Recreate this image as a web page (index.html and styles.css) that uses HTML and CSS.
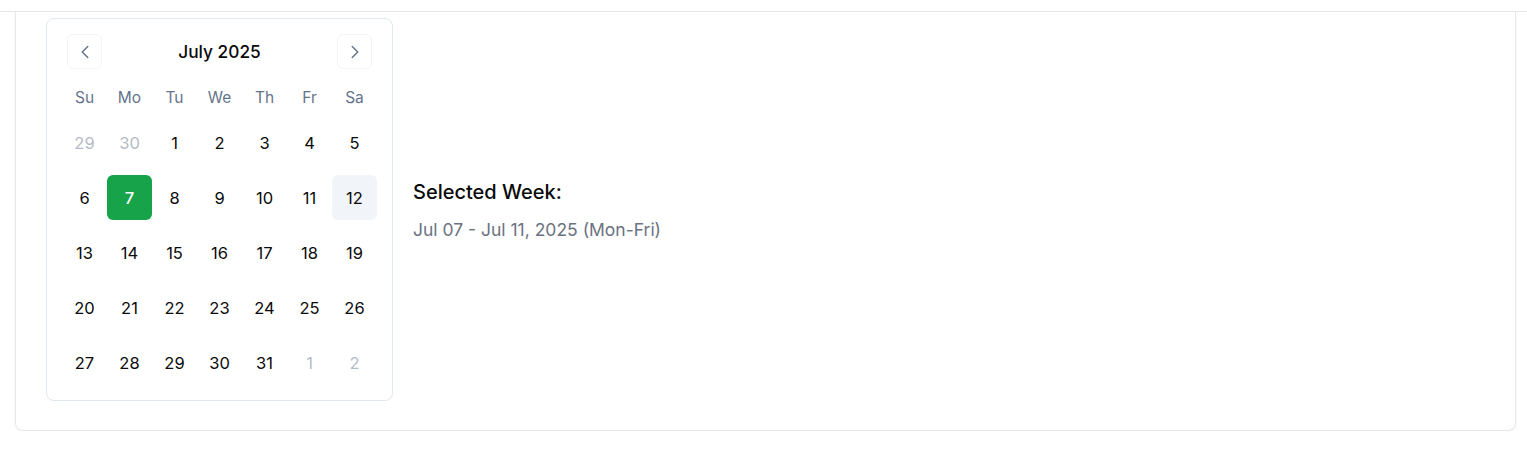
FILE: index.html
```html
<!DOCTYPE html>
<html>
<head>
<meta charset="utf-8">
<link rel="stylesheet" href="styles.css">
</head>
<body>
<div class="topbar"></div>
<div class="card">
  <div class="calendar">
    <div class="cal-header">
      <button class="nav-btn" aria-label="Previous month">
        <svg width="22" height="22" viewBox="0 0 24 24" fill="none" stroke="currentColor" stroke-width="1.6" stroke-linecap="round" stroke-linejoin="round"><path d="M15 18l-6-6 6-6"/></svg>
      </button>
      <div class="cal-title">July 2025</div>
      <button class="nav-btn" aria-label="Next month">
        <svg width="22" height="22" viewBox="0 0 24 24" fill="none" stroke="currentColor" stroke-width="1.6" stroke-linecap="round" stroke-linejoin="round"><path d="M9 18l6-6-6-6"/></svg>
      </button>
    </div>
    <div class="weekdays">
      <div>Su</div><div>Mo</div><div>Tu</div><div>We</div><div>Th</div><div>Fr</div><div>Sa</div>
    </div>
    <div class="weeks">
      <div class="week">
        <div class="day outside">29</div><div class="day outside">30</div><div class="day">1</div><div class="day">2</div><div class="day">3</div><div class="day">4</div><div class="day">5</div>
      </div>
      <div class="week">
        <div class="day">6</div><div class="day selected">7</div><div class="day">8</div><div class="day">9</div><div class="day">10</div><div class="day">11</div><div class="day today">12</div>
      </div>
      <div class="week">
        <div class="day">13</div><div class="day">14</div><div class="day">15</div><div class="day">16</div><div class="day">17</div><div class="day">18</div><div class="day">19</div>
      </div>
      <div class="week">
        <div class="day">20</div><div class="day">21</div><div class="day">22</div><div class="day">23</div><div class="day">24</div><div class="day">25</div><div class="day">26</div>
      </div>
      <div class="week">
        <div class="day">27</div><div class="day">28</div><div class="day">29</div><div class="day">30</div><div class="day">31</div><div class="day outside">1</div><div class="day outside">2</div>
      </div>
    </div>
  </div>
  <div class="info">
    <div class="info-title">Selected Week:</div>
    <div class="info-range">Jul 07 - Jul 11, 2025 (Mon-Fri)</div>
  </div>
</div>
</body>
</html>
```
FILE: styles.css
```css
* { box-sizing: border-box; }
html, body { margin: 0; padding: 0; background: #ffffff; }
body {
  font-family: Inter, "Noto Sans", "Liberation Sans", sans-serif;
  color: #0a0a0a;
}
.topbar {
  height: 12px;
  border-bottom: 1px solid #e5e7eb;
}
.card {
  margin: 0 11px 0 15px;
  padding: 6px 30px 29px;
  border: 1px solid #e5e7eb;
  border-top: none;
  border-radius: 0 0 8px 8px;
  box-shadow: 0 1px 3px rgba(0,0,0,0.05);
  display: flex;
  align-items: center;
  gap: 20px;
}
.calendar {
  width: 347px;
  padding: 15px;
  border: 1px solid #e2e8f0;
  border-radius: 8px;
  flex-shrink: 0;
}
.cal-header {
  height: 35px;
  padding: 0 5px;
  display: flex;
  align-items: center;
  justify-content: space-between;
}
.nav-btn {
  width: 35px;
  height: 35px;
  padding: 0;
  border: 1px solid #f1f5f9;
  border-radius: 6px;
  background: #ffffff;
  color: #64748b;
  display: flex;
  align-items: center;
  justify-content: center;
}
.cal-title {
  font-size: 17.3px;
  font-weight: 500;
  color: #0a0a0a;
}
.weekdays {
  margin-top: 16px;
  height: 24px;
  display: grid;
  grid-template-columns: repeat(7, 45px);
  align-items: center;
  text-align: center;
  font-size: 15.5px;
  color: #64748b;
}
.weeks {
  margin-top: 11px;
  display: flex;
  flex-direction: column;
  gap: 10px;
}
.week {
  display: grid;
  grid-template-columns: repeat(7, 45px);
}
.day {
  height: 45px;
  display: flex;
  align-items: center;
  justify-content: center;
  font-size: 16.5px;
  color: #0a0a0a;
  border-radius: 6px;
}
.day.outside { color: #b4bbc6; }
.day.selected { background: #16a34a; color: #ffffff; font-weight: 500; }
.day.today { background: #f1f5f9; }
.info-title {
  font-size: 20px;
  font-weight: 500;
  color: #0a0a0a;
}
.info-range {
  margin-top: 15px;
  font-size: 17.5px;
  color: #6b7280;
}
```
